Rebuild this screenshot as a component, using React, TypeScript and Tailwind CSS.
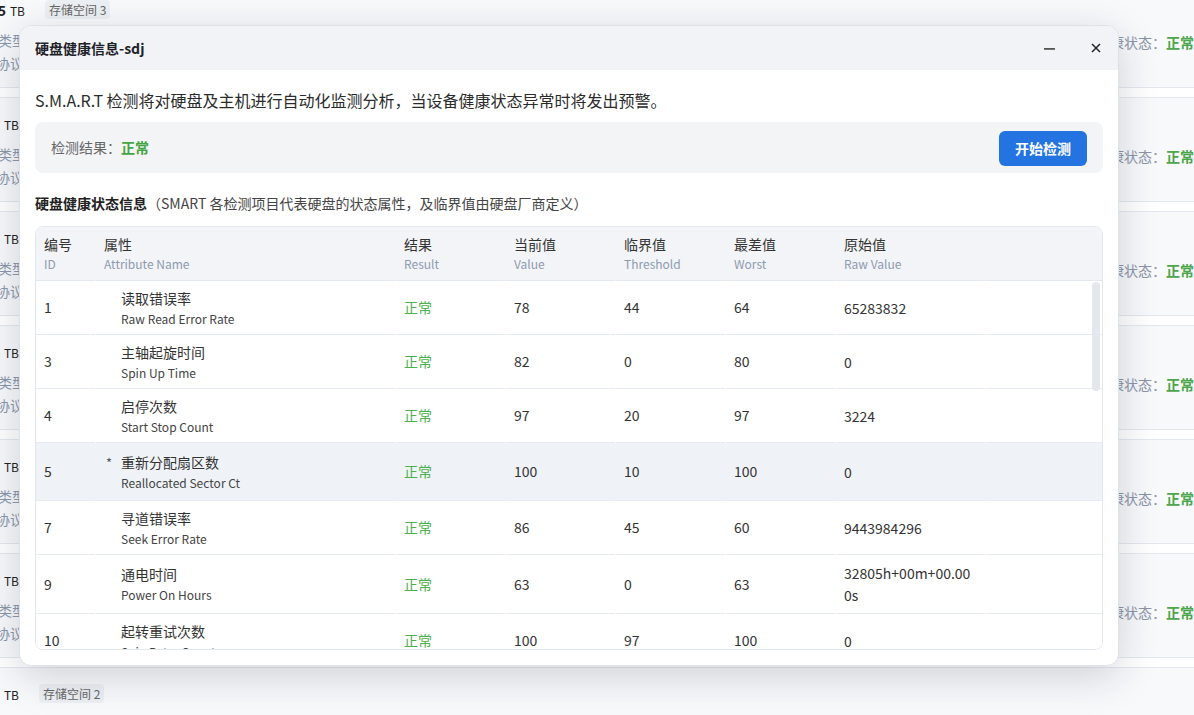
import React from "react";

type Row = {
  id: string;
  zh: string;
  en: string;
  v: string;
  t: string;
  w: string;
  raw: React.ReactNode;
  star?: boolean;
  hl?: boolean;
  tall?: boolean;
};

const rows: Row[] = [
  { id: "1", zh: "读取错误率", en: "Raw Read Error Rate", v: "78", t: "44", w: "64", raw: "65283832" },
  { id: "3", zh: "主轴起旋时间", en: "Spin Up Time", v: "82", t: "0", w: "80", raw: "0" },
  { id: "4", zh: "启停次数", en: "Start Stop Count", v: "97", t: "20", w: "97", raw: "3224" },
  { id: "5", zh: "重新分配扇区数", en: "Reallocated Sector Ct", v: "100", t: "10", w: "100", raw: "0", star: true, hl: true, tall: true },
  { id: "7", zh: "寻道错误率", en: "Seek Error Rate", v: "86", t: "45", w: "60", raw: "9443984296" },
  {
    id: "9",
    zh: "通电时间",
    en: "Power On Hours",
    v: "63",
    t: "0",
    w: "63",
    raw: (
      <>
        32805h+00m+00.00
        <br />
        0s
      </>
    ),
    tall: true,
  },
  { id: "10", zh: "起转重试次数", en: "Spin Retry Count", v: "100", t: "97", w: "100", raw: "0" },
  { id: "12", zh: "通电周期计数", en: "Power Cycle Count", v: "97", t: "20", w: "97", raw: "3112" },
  { id: "183", zh: "降速运行次数", en: "Runtime Bad Block", v: "100", t: "0", w: "100", raw: "0" },
];

const cards = [
  { size: "14.5", w: "w-[105px]", tag: "存储空间 3" },
  { size: "3.6", w: "w-[99px]", tag: "存储空间 1" },
  { size: "3.6", w: "w-[99px]", tag: "存储空间 1" },
  { size: "3.6", w: "w-[99px]", tag: "存储空间 1" },
  { size: "3.6", w: "w-[99px]", tag: "存储空间 1" },
  { size: "3.6", w: "w-[99px]", tag: "存储空间 2" },
  { size: "3.6", w: "w-[99px]", tag: "存储空间 2" },
];

const GRID = "grid grid-cols-[60px_300px_110px_110px_110px_110px_150px_1fr]";

function Cell({ children, last, className = "" }: { children?: React.ReactNode; last?: boolean; className?: string }) {
  return (
    <div className={`flex items-center border-b border-[#e6ebf1] pl-[8px] ${last ? "" : "mr-px"} ${className}`}>
      {children}
    </div>
  );
}

export default function App() {
  return (
    <div className="relative h-[715px] w-[1194px] overflow-hidden bg-white [font-family:'Noto_Sans_CJK_SC','Noto_Sans',sans-serif]">
      {/* background list */}
      <div className="mt-[-17px] flex flex-col gap-[9px]">
        {cards.map((c, i) => (
          <div key={i} className="flex h-[105px] border-y border-[#e3e8ef] bg-[#f8f9fb]">
            <div className="ml-[-80px] flex flex-col pt-[13px]">
              <div className="flex h-6 items-center gap-[20px]">
                <span className={`${c.w} whitespace-nowrap text-right text-[#222]`}>
                  <span className="text-[14px] font-bold">{c.size}</span>
                  <span className="ml-[4px] text-[12px]">TB</span>
                </span>
                <span className="rounded-[4px] bg-[#eceff3] px-[4px] text-[12px] leading-[19px] text-[#666]">{c.tag}</span>
              </div>
              <div className="mt-[8px] pl-[78px] text-[14px] leading-[23px] text-[#8a97ad]">类型：SATA 机械硬盘</div>
              <div className="pl-[76px] text-[14px] leading-[23px] text-[#8a97ad]">协议：SATA</div>
            </div>
            <div className="ml-auto whitespace-nowrap pt-[48px] text-[14px] leading-[20px]">
              <span className="text-[#8a94a6]">健康状态：</span>
              <span className="font-bold text-[#4ca64c]">正常</span>
            </div>
          </div>
        ))}
      </div>

      {/* modal */}
      <div className="absolute left-[19px] top-[25px] flex h-[641px] w-[1100px] flex-col overflow-hidden rounded-[12px] border border-[#dde2e9] bg-white shadow-[0_10px_40px_rgba(20,30,50,0.18)]">
        <div className="flex h-[44px] shrink-0 items-center bg-[#f1f3f7] pl-[15px] pr-[17px]">
          <span className="text-[14px] font-bold text-[#1f2329]">硬盘健康信息-sdj</span>
          <div className="ml-auto flex items-center gap-[36px]">
            <svg width="11" height="11" viewBox="0 0 11 11">
              <rect x="0" y="5" width="11" height="1.8" fill="#555" />
            </svg>
            <svg width="10" height="10" viewBox="0 0 10 10">
              <path d="M1 1L9 9M9 1L1 9" stroke="#222" strokeWidth="1.5" />
            </svg>
          </div>
        </div>

        <div className="flex min-h-0 flex-1 flex-col px-[15px] pb-[15px] pt-[18px]">
          <div className="text-[16px] leading-[24px] text-[#2b2b2b]">
            S.M.A.R.T 检测将对硬盘及主机进行自动化监测分析，当设备健康状态异常时将发出预警。
          </div>

          <div className="mt-[10px] flex h-[51px] shrink-0 items-center rounded-[8px] bg-[#f3f4f6] pl-[16px] pr-[16px]">
            <span className="text-[14px] text-[#666]">检测结果：</span>
            <span className="text-[14px] font-bold text-[#44a544]">正常</span>
            <button className="ml-auto mt-[1px] h-[35px] w-[88px] rounded-[6px] bg-[#2374e1] text-[14px] font-bold text-white">
              开始检测
            </button>
          </div>

          <div className="mt-[20px] text-[14px] leading-[20px] text-[#444]">
            <span className="font-bold text-[#222]">硬盘健康状态信息</span>
            （SMART 各检测项目代表硬盘的状态属性，及临界值由硬盘厂商定义）
          </div>

          <div className="mt-[13px] flex min-h-0 flex-1 flex-col overflow-hidden rounded-[8px] border border-[#e3e8ef]">
            <div className={`${GRID} h-[54px] shrink-0 bg-[#f3f4f7]`}>
              {[
                ["编号", "ID"],
                ["属性", "Attribute Name"],
                ["结果", "Result"],
                ["当前值", "Value"],
                ["临界值", "Threshold"],
                ["最差值", "Worst"],
                ["原始值", "Raw Value"],
                ["", ""],
              ].map(([zh, en], i) => (
                <div key={i} className={`flex flex-col border-b border-[#e3e8ef] pl-[8px] pt-[7px] ${i < 7 ? "mr-px" : ""}`}>
                  <span className="text-[14px] leading-[20px] text-[#333]">{zh}</span>
                  <span className="text-[12px] leading-[20px] text-[#8d9ab0]">{en}</span>
                </div>
              ))}
            </div>

            <div className="relative min-h-0 flex-1 overflow-hidden">
              {rows.map((r) => (
                <div
                  key={r.id}
                  className={`${GRID} ${r.tall ? "min-h-[58px]" : "min-h-[54px]"} ${r.hl ? "bg-[#eff3f8]" : "bg-white"} text-[14px] text-[#333]`}
                >
                  <Cell>{r.id}</Cell>
                  <Cell>
                    <div className="flex flex-col">
                      <div className="flex">
                        <span className="w-[17px] shrink-0 pl-[2px] text-[13px] leading-[21px] text-[#555]">{r.star ? "*" : ""}</span>
                        <span className="text-[14px] leading-[21px] text-[#333]">{r.zh}</span>
                      </div>
                      <span className="pl-[17px] text-[12px] leading-[19px] text-[#444]">{r.en}</span>
                    </div>
                  </Cell>
                  <Cell>
                    <span className="text-[#4caf50]">正常</span>
                  </Cell>
                  <Cell>{r.v}</Cell>
                  <Cell>{r.t}</Cell>
                  <Cell>{r.w}</Cell>
                  <Cell className="py-[7px]">
                    <span className="leading-[22px]">{r.raw}</span>
                  </Cell>
                  <Cell last />
                </div>
              ))}
              <div className="absolute right-[2px] top-[1px] h-[109px] w-[8px] rounded-full bg-[#e4e7eb]" />
            </div>
          </div>
        </div>
      </div>
    </div>
  );
}
